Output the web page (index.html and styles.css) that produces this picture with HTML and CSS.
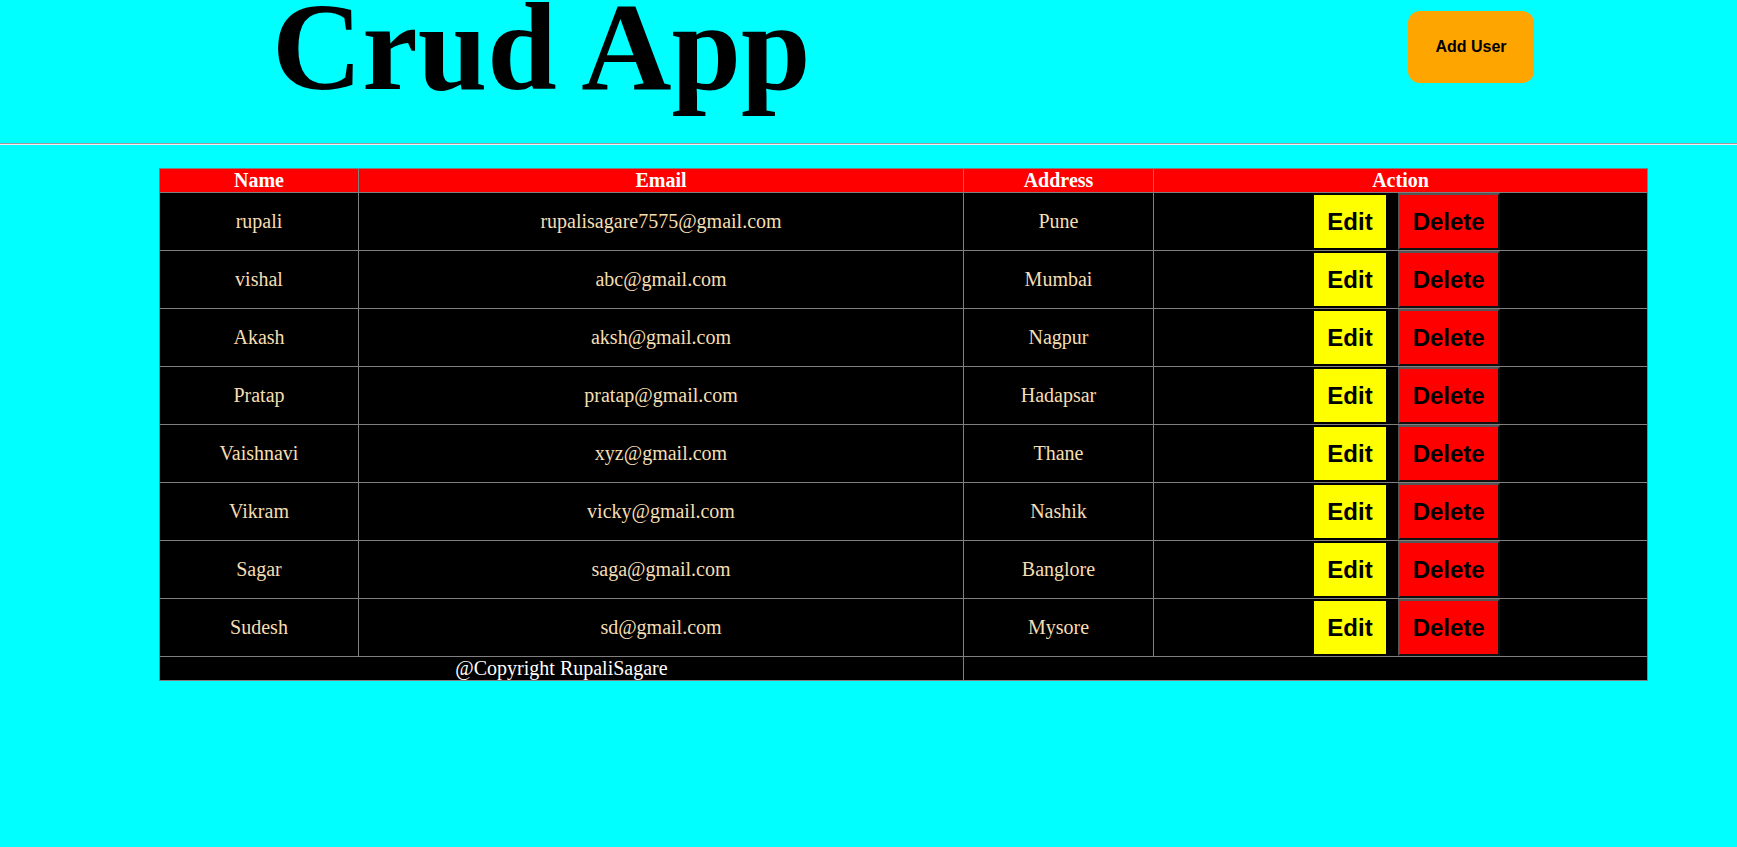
FILE: index.html
```html
<!DOCTYPE html>
<html>
<head>
<meta charset="utf-8">
<title>Crud App</title>
<link rel="stylesheet" href="styles.css">
</head>
<body>
<header class="top">
  <h1 class="title">Crud App</h1>
  <button class="add-btn">Add User</button>
</header>
<hr class="rule">
<main class="content">
  <table class="users">
    <colgroup>
      <col class="c-name">
      <col class="c-email">
      <col class="c-addr">
      <col class="c-action">
    </colgroup>
    <thead>
      <tr><th>Name</th><th>Email</th><th>Address</th><th>Action</th></tr>
    </thead>
    <tbody>
      <tr><td>rupali</td><td>rupalisagare7575@gmail.com</td><td>Pune</td><td><div class="actions"><button class="edit">Edit</button><button class="del">Delete</button></div></td></tr>
      <tr><td>vishal</td><td>abc@gmail.com</td><td>Mumbai</td><td><div class="actions"><button class="edit">Edit</button><button class="del">Delete</button></div></td></tr>
      <tr><td>Akash</td><td>aksh@gmail.com</td><td>Nagpur</td><td><div class="actions"><button class="edit">Edit</button><button class="del">Delete</button></div></td></tr>
      <tr><td>Pratap</td><td>pratap@gmail.com</td><td>Hadapsar</td><td><div class="actions"><button class="edit">Edit</button><button class="del">Delete</button></div></td></tr>
      <tr><td>Vaishnavi</td><td>xyz@gmail.com</td><td>Thane</td><td><div class="actions"><button class="edit">Edit</button><button class="del">Delete</button></div></td></tr>
      <tr><td>Vikram</td><td>vicky@gmail.com</td><td>Nashik</td><td><div class="actions"><button class="edit">Edit</button><button class="del">Delete</button></div></td></tr>
      <tr><td>Sagar</td><td>saga@gmail.com</td><td>Banglore</td><td><div class="actions"><button class="edit">Edit</button><button class="del">Delete</button></div></td></tr>
      <tr><td>Sudesh</td><td>sd@gmail.com</td><td>Mysore</td><td><div class="actions"><button class="edit">Edit</button><button class="del">Delete</button></div></td></tr>
    </tbody>
    <tfoot>
      <tr><td colspan="2" class="copy">@Copyright RupaliSagare</td><td colspan="2" class="copy"></td></tr>
    </tfoot>
  </table>
</main>
</body>
</html>
```

FILE: styles.css
```css
html, body {
  margin: 0;
  padding: 0;
}

body {
  background: #00ffff;
  font-family: "Liberation Serif", "Times New Roman", serif;
}

.top {
  display: flex;
  align-items: flex-start;
  height: 143px;
  padding-right: 203px;
}

.title {
  margin: 0 0 0 272px;
  font-family: "Liberation Serif", "Times New Roman", serif;
  font-weight: bold;
  font-size: 125px;
  line-height: 94px;
  color: #000;
}

.add-btn {
  margin: 11px 0 0 auto;
  padding: 27px 27.5px;
  border: none;
  border-radius: 12px;
  background: #ffa500;
  color: #000;
  font-family: "Liberation Sans", Arial, sans-serif;
  font-weight: bold;
  font-size: 16px;
  line-height: 18px;
}

.rule {
  margin: 0;
  height: 0;
  border: 0;
  border-top: 1px solid #9a9a9a;
  border-bottom: 1px solid #eeeeee;
}

.content {
  padding: 23px 90px 0 159px;
}

.users {
  width: 100%;
  border-collapse: collapse;
  table-layout: fixed;
  font-family: "Liberation Serif", "Times New Roman", serif;
  font-size: 20px;
}

.c-name { width: 199px; }
.c-email { width: 605px; }
.c-addr { width: 190px; }
.c-action { width: 494px; }

.users th,
.users td {
  border: 1px solid #808080;
  padding: 0;
  text-align: center;
  vertical-align: middle;
}

.users th {
  background: #ff0000;
  color: #ffffff;
  font-weight: bold;
  line-height: 23px;
}

.users td {
  background: #000000;
  color: #f5deb3;
  line-height: 23px;
}

.users td.copy {
  color: #ffffff;
}

.actions {
  display: flex;
  align-items: center;
  justify-content: center;
  gap: 12px;
  padding-left: 13px;
}

.edit,
.del {
  margin: 0;
  padding: 13px;
  font-family: "Liberation Sans", Arial, sans-serif;
  font-weight: bold;
  font-size: 24px;
  line-height: 27px;
  color: #000;
}

.edit {
  border: none;
  background: #ffff00;
}

.del {
  border-style: solid;
  border-width: 2px;
  border-color: #555555 #111111 #111111 #555555;
  background: #ff0000;
}
```
